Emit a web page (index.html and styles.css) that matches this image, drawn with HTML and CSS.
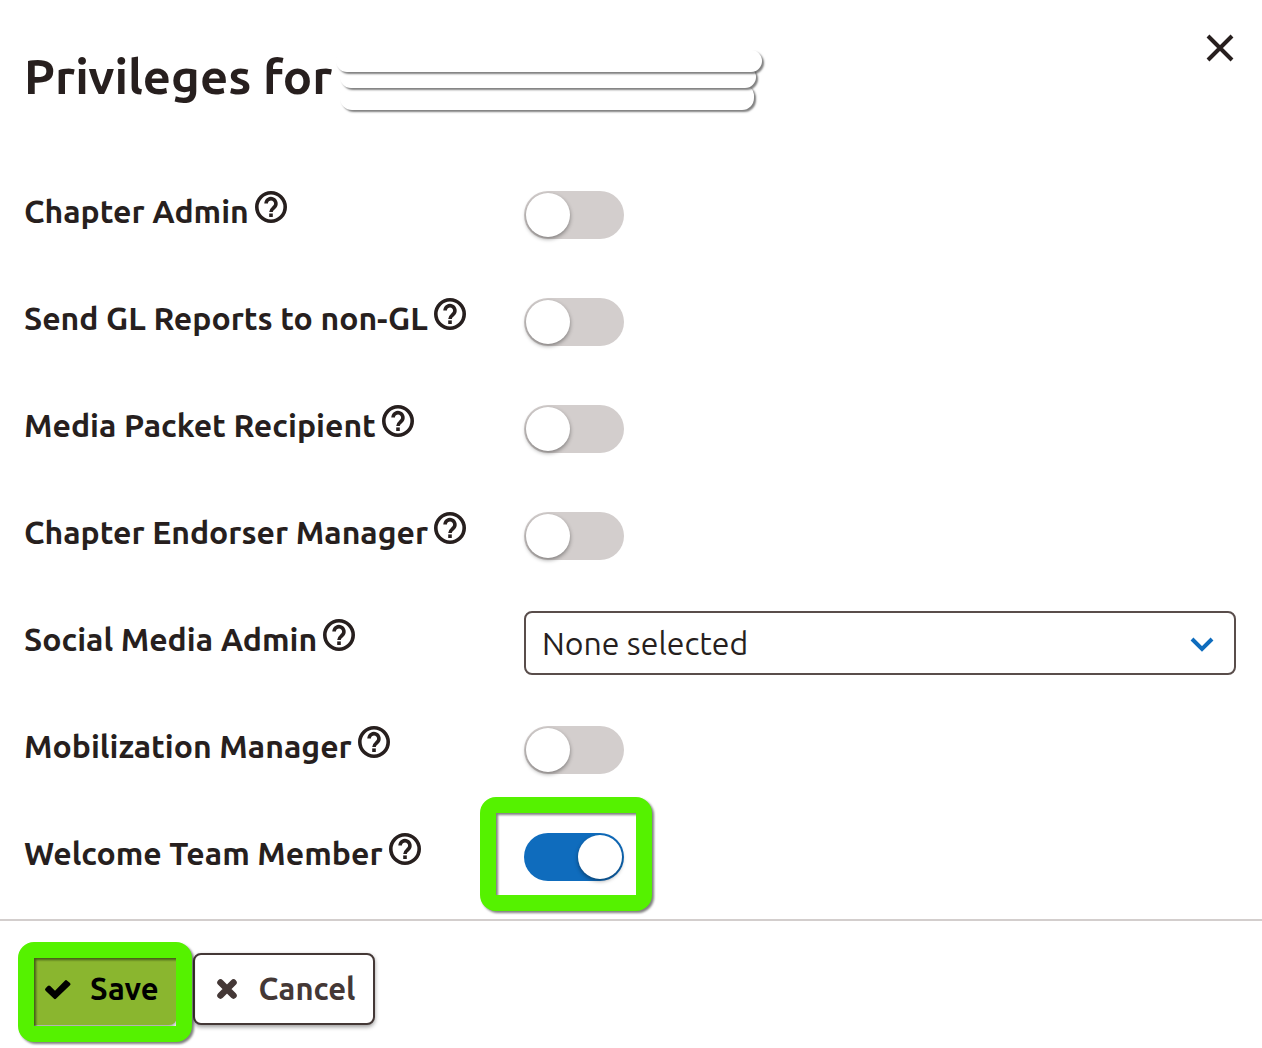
FILE: index.html
```
<!DOCTYPE html>
<html lang="en">
<head>
  <meta charset="UTF-8" />
  <meta name="viewport" content="width=device-width, initial-scale=1.0" />
  <title>Privileges</title>
  <link rel="stylesheet" href="styles.css">
</head>
<body>
  <!-- Shared icons -->
  <svg class="sprite" aria-hidden="true">
    <symbol id="icon-help" viewBox="0 0 32 32">
      <circle cx="16" cy="16" r="14.2" fill="none" stroke="currentColor" stroke-width="3.6" />
      <path d="M11.1 12.6a4.9 4.9 0 1 1 8.2 3.6c-1.900 1.700-3.300 2.400-3.300 4.700" fill="none" stroke="currentColor" stroke-width="3.600" />
      <path d="M14.200 22.400h3.600v3.600h-3.600z" fill="currentColor" />
    </symbol>
  </svg>

  <form class="dialog">
    <header class="dialog-header">
      <h1>Privileges for</h1>
      <div class="redacted">
        <span class="bar bar-top"></span>
        <span class="bar bar-middle"></span>
        <span class="bar bar-bottom"></span>
      </div>
      <button type="button" class="close-btn" aria-label="Close">
        <svg viewBox="0 0 28 28" width="28" height="28"><path d="M2 2l24 24M26 2L2 26" fill="none" stroke="currentColor" stroke-width="4" /></svg>
      </button>
    </header>

    <div class="fields">
      <div class="row">
        <div class="label"><label for="chapterAdmin">Chapter Admin</label><svg class="help"><use href="#icon-help" /></svg></div>
        <div><input type="checkbox" class="toggle" id="chapterAdmin" /></div>
      </div>
      <div class="row">
        <div class="label"><label for="glReports">Send GL Reports to non-GL</label><svg class="help"><use href="#icon-help" /></svg></div>
        <div><input type="checkbox" class="toggle" id="glReports" /></div>
      </div>
      <div class="row">
        <div class="label"><label for="mediaPacket">Media Packet Recipient</label><svg class="help"><use href="#icon-help" /></svg></div>
        <div><input type="checkbox" class="toggle" id="mediaPacket" /></div>
      </div>
      <div class="row">
        <div class="label"><label for="endorserManager">Chapter Endorser Manager</label><svg class="help"><use href="#icon-help" /></svg></div>
        <div><input type="checkbox" class="toggle" id="endorserManager" /></div>
      </div>
      <div class="row">
        <div class="label"><label for="socialMedia">Social Media Admin</label><svg class="help"><use href="#icon-help" /></svg></div>
        <div class="select-wrap">
          <select id="socialMedia">
            <option>None selected</option>
          </select>
          <svg class="chevron" viewBox="0 0 24 16" width="24" height="16"><path d="M2 3l10 10L22 3" fill="none" stroke="currentColor" stroke-width="4" /></svg>
        </div>
      </div>
      <div class="row">
        <div class="label"><label for="mobilization">Mobilization Manager</label><svg class="help"><use href="#icon-help" /></svg></div>
        <div><input type="checkbox" class="toggle" id="mobilization" /></div>
      </div>
      <div class="row">
        <div class="label"><label for="welcomeTeam">Welcome Team Member</label><svg class="help"><use href="#icon-help" /></svg></div>
        <div class="highlight highlight-toggle"><input type="checkbox" class="toggle" id="welcomeTeam" checked /></div>
      </div>
    </div>

    <footer class="dialog-footer">
      <div class="highlight highlight-save">
        <button type="submit" class="btn btn-save">
          <svg class="btn-icon" viewBox="0 0 28 24"><path d="M1.600 11.300l2.200-2.200q1.200-1.200 2.400 0l4.800 4.600 9.800-10q1.200-1.200 2.400 0l2.800 2.200q1.200 1.200 0 2.400L12.200 21.600q-1.200 1.200-2.400 0L1.600 13.700q-1.200-1.200 0-2.400z" fill="currentColor" /></svg>
          Save
        </button>
      </div>
      <button type="button" class="btn btn-cancel">
        <svg class="btn-icon" viewBox="0 0 28 24"><path d="M7.500 5.500l13 13M20.500 5.500l-13 13" fill="none" stroke="currentColor" stroke-width="6.500" stroke-linecap="round" /></svg>
        Cancel
      </button>
    </footer>
  </form>
</body>
</html>
```
FILE: styles.css
```
* {
  box-sizing: border-box;
}
body {
  margin: 0;
  background-color: #fff;
  color: #271f1e;
  font-family: Ubuntu, "Noto Sans", sans-serif;
  font-size: 32px;
  line-height: 40px;
}
.sprite {
  display: none;
}

/* Header */
.dialog-header {
  display: flex;
  align-items: flex-start;
  padding: 32px 28px 0 24px;
  height: 183px;
}
h1 {
  margin: 16px 0 0;
  font-size: 49px;
  font-weight: 700;
  line-height: 56px;
  white-space: nowrap;
}
.redacted {
  display: flex;
  flex-direction: column;
  margin: 18px auto 0 4px;
}
.bar {
  position: relative;
  height: 22px;
  border-radius: 12px;
  background-color: #fff;
  box-shadow: 2px 2px 2px rgba(0, 0, 0, 0.5);
}
.bar-top {
  z-index: 3;
  width: 426px;
}
.bar-middle {
  z-index: 2;
  width: 416px;
  margin: -6px 0 0 4px;
}
.bar-bottom {
  z-index: 1;
  width: 414px;
  height: 26px;
  margin: -4px 0 0 4px;
}
.close-btn {
  display: flex;
  margin: 2px 0 0;
  padding: 0;
  border: none;
  background: none;
  color: #271f1e;
  cursor: pointer;
}

/* Privilege rows */
.fields {
  display: grid;
  gap: 43px;
  padding: 0 26px 0 24px;
}
.row {
  display: grid;
  grid-template-columns: 500px 1fr;
  align-items: center;
  height: 64px;
}
.label {
  display: flex;
  align-items: center;
  gap: 6px;
  margin-bottom: 16px;
  font-weight: 700;
  white-space: nowrap;
}
.label label {
  padding-top: 8px;
}
.help {
  width: 32px;
  height: 32px;
}
.toggle {
  appearance: none;
  display: block;
  width: 100px;
  height: 48px;
  margin: 0;
  padding: 2px;
  border-radius: 24px;
  background-color: #d3cecd;
  cursor: pointer;
}
.toggle::before {
  content: "";
  display: block;
  width: 44px;
  height: 44px;
  border-radius: 50%;
  background-color: #fff;
  box-shadow: 0 2px 4px rgba(0, 0, 0, 0.4);
}
.toggle:checked {
  background-color: #0f6cbd;
}
.toggle:checked::before {
  margin-left: auto;
}
.select-wrap {
  position: relative;
}
select {
  appearance: none;
  display: block;
  width: 100%;
  height: 64px;
  padding: 0 64px 0 16px;
  border: 2px solid #594d4b;
  border-radius: 8px;
  background-color: #fff;
  color: #271f1e;
  font: inherit;
}
.chevron {
  position: absolute;
  top: 25px;
  right: 22px;
  color: #0f6cbd;
  pointer-events: none;
}

/* Green marker boxes */
.highlight {
  position: relative;
  justify-self: start;
}
.highlight::after {
  content: "";
  position: absolute;
  border: 16px solid #55f200;
  border-radius: 16px;
  filter: drop-shadow(2px 2px 1px rgba(0, 0, 0, 0.5));
  pointer-events: none;
}
.highlight-toggle::after {
  inset: -36px -28px -30px -44px;
}
.highlight-save::after {
  inset: -11px -15px -17px -6px;
}

/* Footer */
.dialog-footer {
  display: flex;
  gap: 16px;
  margin-top: 30px;
  padding: 32px 24px 23px;
  border-top: 2px solid #d3cecd;
}
.btn {
  display: flex;
  align-items: center;
  gap: 18px;
  height: 72px;
  padding: 0 16px 0 18px;
  border: 2px solid #443836;
  border-radius: 8px;
  background-color: #fff;
  box-shadow: 0 2px 4px rgba(0, 0, 0, 0.4);
  color: #443836;
  font: inherit;
  font-size: 31px;
  font-weight: 700;
  cursor: pointer;
}
.btn-save {
  border-color: #8ab62f;
  background-color: #8ab62f;
  color: #000;
}
.btn-cancel {
  padding-right: 18px;
}
.btn-icon {
  width: 28px;
  height: 24px;
}
```
